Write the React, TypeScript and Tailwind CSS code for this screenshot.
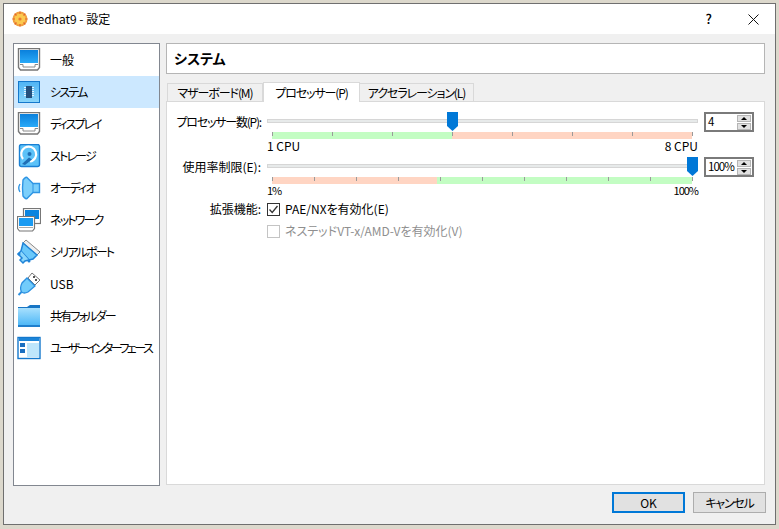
import type { ReactNode } from 'react'

const FONT = "font-['Noto_Sans_CJK_JP','Noto_Sans',sans-serif] [font-feature-settings:'palt']"

function Monitor() {
  return (
    <svg width="24" height="24" viewBox="0 0 24 24">
      <path d="M1.5 0.5H22.5V19.5L20.5 22H3.5L1.5 19.5Z" fill="#fff" stroke="#777" strokeWidth="1.4" />
      <rect x="3" y="2" width="18" height="13" fill="url(#mon)" />
      <path d="M3 16.5H6V19H18V16.5H21" fill="none" stroke="#8a8a8a" />
      <defs>
        <linearGradient id="mon" x1="0" y1="0" x2="0" y2="1">
          <stop offset="0" stopColor="#0a80dc" />
          <stop offset="1" stopColor="#2aaaf8" />
        </linearGradient>
      </defs>
    </svg>
  )
}

function Chip() {
  return (
    <svg width="24" height="24" viewBox="0 0 24 24">
      <rect x="1.5" y="1.5" width="21" height="21" fill="url(#chipbg)" stroke="#1478cc" />
      <path d="M7 7.5H17M7 9.5H17M7 11.5H17M7 13.5H17M7 15.5H17" stroke="#e4f5ff" />
      <rect x="9" y="6" width="6" height="12" fill="#24507c" />
      <defs>
        <linearGradient id="chipbg" x1="0" y1="0" x2="0" y2="1">
          <stop offset="0" stopColor="#4fb4f4" />
          <stop offset="1" stopColor="#8ad6fb" />
        </linearGradient>
      </defs>
    </svg>
  )
}

function Disk() {
  return (
    <svg width="24" height="24" viewBox="0 0 24 24">
      <rect x="2.5" y="0.5" width="20" height="22" rx="2" fill="#5cc2f8" stroke="#1a80d4" strokeWidth="1.4" />
      <path d="M6 15A7.5 7.5 0 1 1 13 17.5" fill="none" stroke="#fff" strokeWidth="2.2" />
      <circle cx="12.5" cy="10" r="2" fill="#1f6fb5" />
      <path d="M5 20L12 13.5L15 15.5L8 21Z" fill="#1f6fb5" />
    </svg>
  )
}

function Speaker() {
  return (
    <svg width="24" height="24" viewBox="0 0 24 24">
      <path d="M3 8Q0.5 12 3 16" fill="none" stroke="#2f95e4" strokeWidth="1.4" />
      <path d="M6 4Q9 0 10.5 2L16 7.5H22.5V16.5H16L10.5 22Q9 24 6 20Q5 12 6 4Z" fill="#7ccffb" stroke="#2f95e4" strokeWidth="1.4" />
      <path d="M16 7.5V16.5" stroke="#2f95e4" />
    </svg>
  )
}

function Network() {
  return (
    <svg width="24" height="24" viewBox="0 0 24 24">
      <rect x="6.5" y="0.5" width="17" height="15" fill="#fff" stroke="#777" strokeWidth="1.2" />
      <rect x="8" y="2" width="14" height="9" fill="#0a84e0" />
      <path d="M0.5 8.5H17.5V20.5L15.5 23H2.5L0.5 20.5Z" fill="#fff" stroke="#777" strokeWidth="1.2" />
      <rect x="2" y="10" width="14" height="8" fill="#1b9bf2" />
      <path d="M2 19.5H16" stroke="#aaa" />
    </svg>
  )
}

function Serial() {
  return (
    <svg width="24" height="26" viewBox="0 0 24 26">
      <path d="M9 1L23 13L20 16L6 4Z" fill="#eee" stroke="#8a8a8a" />
      <path d="M6 4L20 16L16 20L12 21L4 12Z" fill="#6ac8fa" stroke="#1f84d8" strokeWidth="1.5" />
      <path d="M4 12L1 15L5 19L3 21L6 24L8 22L12 21" fill="#8ad6fb" stroke="#1f84d8" strokeWidth="1.5" />
      <circle cx="2" cy="15" r="1.5" fill="#1f84d8" />
      <circle cx="12" cy="22" r="1.5" fill="#1f84d8" />
    </svg>
  )
}

function Usb() {
  return (
    <svg width="24" height="24" viewBox="0 0 24 24">
      <path d="M15 1L23 8L18 13L11 6Z" fill="#fff" stroke="#777" />
      <rect x="16" y="4" width="2" height="2" fill="#555" />
      <rect x="18" y="7" width="2" height="2" fill="#555" />
      <path d="M10 6L18 14L11 20Q7 22 4.5 20Q2.5 16 5 11Z" fill="#72ccfb" stroke="#2b8fe0" strokeWidth="1.3" />
      <path d="M4.5 20L1.5 23" stroke="#2b8fe0" strokeWidth="2" />
    </svg>
  )
}

function Folder() {
  return (
    <svg width="24" height="24" viewBox="0 0 24 24">
      <path d="M1 3H10L13 1H23V5H1Z" fill="#1775c4" />
      <rect x="1" y="4" width="22" height="19" fill="url(#fold)" />
      <rect x="1" y="21" width="22" height="2" fill="#1f7fcc" />
      <defs>
        <linearGradient id="fold" x1="0" y1="0" x2="0" y2="1">
          <stop offset="0" stopColor="#a8e0fd" />
          <stop offset="1" stopColor="#45b4f6" />
        </linearGradient>
      </defs>
    </svg>
  )
}

function WindowIcon() {
  return (
    <svg width="24" height="24" viewBox="0 0 24 24">
      <rect x="1" y="1.5" width="22" height="21" fill="#fff" stroke="#1478cc" strokeWidth="1.4" />
      <rect x="2" y="2" width="20" height="3" fill="#1b84d8" />
      <rect x="3" y="7" width="5" height="4" fill="#1b6fc0" />
      <rect x="3" y="13" width="5" height="4" fill="#1b6fc0" />
      <rect x="10" y="7" width="12" height="14" fill="#bfe6fb" />
    </svg>
  )
}

function VBoxLogo() {
  return (
    <svg width="16" height="16" viewBox="0 0 16 16">
      <circle cx="8" cy="8" r="7.5" fill="#f0a040" />
      <circle cx="8" cy="8" r="5.5" fill="#fbc94e" />
      <path d="M8 0.5V3M8 13V15.5M0.5 8H3M13 8H15.5M2.7 2.7L4.5 4.5M11.5 11.5L13.3 13.3M13.3 2.7L11.5 4.5M4.5 11.5L2.7 13.3" stroke="#e4662c" strokeWidth="1.2" />
      <circle cx="8" cy="8" r="1.6" fill="#ea7a30" />
    </svg>
  )
}

const items: { label: string; icon: ReactNode; tracking: string }[] = [
  { label: '一般', icon: <Monitor />, tracking: '' },
  { label: 'システム', icon: <Chip />, tracking: 'tracking-[-1.8px]' },
  { label: 'ディスプレイ', icon: <Monitor />, tracking: 'tracking-[-2px]' },
  { label: 'ストレージ', icon: <Disk />, tracking: 'tracking-[-1.8px]' },
  { label: 'オーディオ', icon: <Speaker />, tracking: 'tracking-[-1.8px]' },
  { label: 'ネットワーク', icon: <Network />, tracking: 'tracking-[-1.8px]' },
  { label: 'シリアルポート', icon: <Serial />, tracking: 'tracking-[-1.8px]' },
  { label: 'USB', icon: <Usb />, tracking: '' },
  { label: '共有フォルダー', icon: <Folder />, tracking: 'tracking-[-1.8px]' },
  { label: 'ユーザーインターフェース', icon: <WindowIcon />, tracking: 'tracking-[-2.5px]' },
]

function SpinBox({ value }: { value: string }) {
  return (
    <div className="flex h-[20px] w-[50px] shrink-0 items-center border-2 border-[#7a7a7a] bg-white pl-[2px] pr-[1px]">
      <span className="flex-1 text-[11.5px] leading-none tracking-[-1px]">{value}</span>
      <div className="flex w-[14px] flex-col gap-px">
        <div className="flex h-[7px] items-center justify-center border border-[#b5b5b5] bg-[#e1e1e1] text-[0px]">
          <div className="border-x-[3px] border-b-[3px] border-x-transparent border-b-black" />
        </div>
        <div className="flex h-[7px] items-center justify-center border border-[#b5b5b5] bg-[#e1e1e1] text-[0px]">
          <div className="border-x-[3px] border-t-[3px] border-x-transparent border-t-black" />
        </div>
      </div>
    </div>
  )
}

function Thumb({ className }: { className: string }) {
  return (
    <svg className={className} width="11" height="19" viewBox="0 0 11 19">
      <path d="M0 0H11V14L5.5 19L0 14Z" fill="#0078d7" />
    </svg>
  )
}

function Ticks({ at }: { at: number[] }) {
  return (
    <>
      {at.map((p) => (
        <div key={p} className="absolute top-0 h-[4px] w-px bg-[#9a9a9a]" style={{ left: p }} />
      ))}
    </>
  )
}

function Check({ checked }: { checked: boolean }) {
  return (
    <div
      className={
        'flex h-[13px] w-[13px] items-center justify-center border bg-white ' +
        (checked ? 'border-[#333]' : 'border-[#c4c4c4]')
      }
    >
      {checked && (
        <svg width="11" height="11" viewBox="0 0 11 11">
          <path d="M1.5 5.5L4.2 8.5L9.5 2" fill="none" stroke="#333" strokeWidth="1.3" />
        </svg>
      )}
    </div>
  )
}

export default function App() {
  return (
    <div className={`h-[529px] w-[779px] overflow-hidden bg-[#dcd8cc] px-[3px] pb-[4px] pt-[3px] text-[12px] text-black ${FONT}`}>
      <div className="flex h-full flex-col border border-[#6f6f6f] bg-[#f0f0f0]">
        {/* title bar */}
        <div className="flex h-[30px] shrink-0 items-center bg-white pl-[8px]">
          <VBoxLogo />
          <span className="ml-[5px] text-[12px]">redhat9 - 設定</span>
          <span className="ml-auto mr-[36px] text-[13px] font-medium">?</span>
          <svg className="mr-[16px]" width="11" height="11" viewBox="0 0 11 11">
            <path d="M0.5 0.5L10.5 10.5M10.5 0.5L0.5 10.5" stroke="#111" />
          </svg>
        </div>

        <div className="flex min-h-0 flex-1 gap-[6px] pl-[9px] pr-[10px] pt-[9px]">
          {/* side list */}
          <div className="h-[443px] w-[147px] shrink-0 border border-[#828790] bg-white">
            {items.map((it, i) => (
              <div key={it.label} className={'flex h-[32px] items-center ' + (i === 1 ? 'bg-[#cce8ff]' : '')}>
                <div className="flex w-[36px] shrink-0 pl-[3px]">{it.icon}</div>
                <span className={'whitespace-nowrap text-[12px] ' + it.tracking}>{it.label}</span>
              </div>
            ))}
          </div>

          {/* right column */}
          <div className="flex min-w-0 flex-1 flex-col">
            <div className="flex h-[31px] shrink-0 items-center border border-[#b5b5b5] bg-white pl-[7px] text-[14px] font-bold">
              システム
            </div>

            <div className="mt-[8px] flex h-[19px] items-end pl-[1px] tracking-[-1.1px]">
              <div className="flex h-[18px] w-[96px] items-center justify-center border border-b-0 border-[#d9d9d9] bg-[#f0f0f0] whitespace-nowrap">
                マザーボード(M)
              </div>
              <div className="relative z-10 -mb-px flex h-[20px] w-[97px] items-center justify-center border border-b-0 border-[#d9d9d9] bg-white whitespace-nowrap">
                プロセッサー(P)
              </div>
              <div className="flex h-[18px] w-[114px] items-center justify-center border border-b-0 border-l-0 border-[#d9d9d9] bg-[#f0f0f0] whitespace-nowrap">
                アクセラレーション(L)
              </div>
            </div>

            {/* tab page */}
            <div className="h-[385px] border border-[#d9d9d9] bg-white pl-[5px] pt-[10px]">
              <div className="flex items-start">
                <div className="w-[89px] shrink-0 whitespace-nowrap pt-[1px] text-right leading-[18px] tracking-[-1.2px]">プロセッサー数(P):</div>
                <div className="relative ml-[6px] h-[40px] w-[431px] shrink-0">
                  <div className="mt-[7px] h-[4px] border border-[#d6d6d6] bg-[#e7eaea]" />
                  <Thumb className="absolute left-[180px] top-0" />
                  <div className="relative ml-[5px] mt-[9px] flex h-[7px] w-[420px]">
                    <div className="w-[180px] bg-[#c3fdc3]" />
                    <div className="flex-1 bg-[#ffd5c3]" />
                    <Ticks at={[0, 60, 120, 180, 240, 300, 360, 420]} />
                  </div>
                  <div className="flex justify-between leading-[13px]">
                    <span>1 CPU</span>
                    <span>8 CPU</span>
                  </div>
                </div>
                <div className="ml-[6px]">
                  <SpinBox value="4" />
                </div>
              </div>

              <div className="mt-[5px] flex items-start">
                <div className="w-[89px] shrink-0 whitespace-nowrap pt-[1px] text-right leading-[18px]">使用率制限(E):</div>
                <div className="relative ml-[6px] h-[40px] w-[431px] shrink-0">
                  <div className="mt-[7px] h-[4px] border border-[#d6d6d6] bg-[#e7eaea]" />
                  <Thumb className="absolute left-[420px] top-0" />
                  <div className="relative ml-[5px] mt-[9px] flex h-[7px] w-[420px]">
                    <div className="w-[165px] bg-[#ffd5c3]" />
                    <div className="flex-1 bg-[#c3fdc3]" />
                    <Ticks at={[0, 42, 84, 126, 168, 210, 252, 294, 336, 378, 420]} />
                  </div>
                  <div className="flex justify-between text-[11px] leading-[13px] tracking-[-1px]">
                    <span>1%</span>
                    <span>100%</span>
                  </div>
                </div>
                <div className="ml-[6px]">
                  <SpinBox value="100%" />
                </div>
              </div>

              <div className="mt-[3px] flex items-center">
                <div className="w-[89px] shrink-0 whitespace-nowrap text-right">拡張機能:</div>
                <div className="ml-[6px]">
                  <Check checked />
                </div>
                <span className="ml-[5px] whitespace-nowrap">PAE/NXを有効化(E)</span>
              </div>
              <div className="mt-[4px] flex items-center pl-[95px] text-[#8f8f8f]">
                <Check checked={false} />
                <span className="ml-[5px] whitespace-nowrap">ネステッドVT-x/AMD-Vを有効化(V)</span>
              </div>
            </div>
          </div>
        </div>

        {/* buttons */}
        <div className="flex h-[39px] shrink-0 items-start justify-end gap-[8px] pr-[9px] pt-[7px]">
          <button className="h-[21px] w-[73px] border-2 border-[#0078d7] bg-[#e1e1e1] text-[12px]">OK</button>
          <button className="h-[21px] w-[73px] border border-[#adadad] bg-[#e1e1e1] text-[12px] tracking-[-1.2px]">キャンセル</button>
        </div>
      </div>
    </div>
  )
}
